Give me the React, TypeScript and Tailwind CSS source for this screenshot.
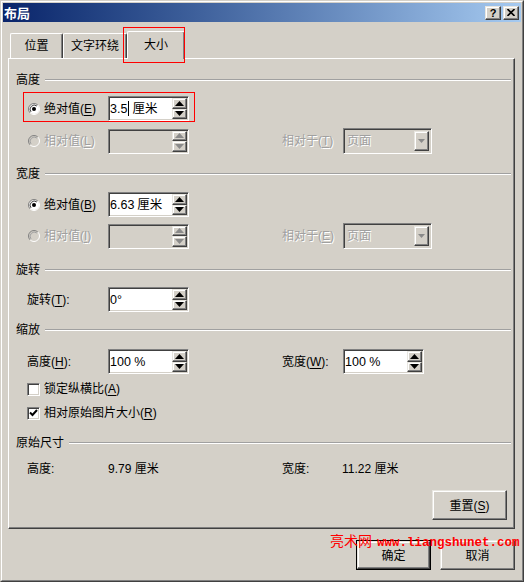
import React from 'react';

const sunken =
  'border border-t-[#808080] border-l-[#808080] border-b-white border-r-white shadow-[inset_1px_1px_0_#404040,inset_-1px_-1px_0_#d4d0c8]';
const raised =
  'border border-t-[#e8e6e0] border-l-[#e8e6e0] border-b-[#404040] border-r-[#404040] shadow-[inset_-1px_-1px_0_#808080,inset_1px_1px_0_#ffffff]';
const dim = 'text-[#a0a0a0] [text-shadow:1px_1px_0_#ffffff]';

function Arrow({ up, disabled, small }: { up?: boolean; disabled?: boolean; small?: boolean }) {
  const w = small ? 7 : 9;
  const h = small ? 4 : 5;
  return (
    <svg width={w} height={h} viewBox={`0 0 ${w} ${h}`}>
      <polygon
        points={up ? `${w / 2},0 ${w},${h} 0,${h}` : `0,0 ${w},0 ${w / 2},${h}`}
        fill={disabled ? '#8a8a8a' : '#000000'}
      />
    </svg>
  );
}

function SpinBox({ children, disabled, w = 'w-[81px]' }: { children?: React.ReactNode; disabled?: boolean; w?: string }) {
  return (
    <div className={`flex h-[25px] ${w} ${sunken} ${disabled ? 'bg-[#d4d0c8]' : 'bg-white'}`}>
      <div className="flex flex-1 items-center pl-[1px] text-[12.5px] text-black">{children}</div>
      <div className="flex w-[16px] flex-col py-px pr-px">
        <div className={`flex flex-1 items-center justify-center bg-[#d4d0c8] ${raised}`}>
          <Arrow up disabled={disabled} />
        </div>
        <div className={`flex flex-1 items-center justify-center bg-[#d4d0c8] ${raised}`}>
          <Arrow disabled={disabled} />
        </div>
      </div>
    </div>
  );
}

function Combo() {
  return (
    <div className={`flex h-[26px] w-[89px] ${sunken} bg-[#d4d0c8]`}>
      <div className={`flex flex-1 items-center pl-[3px] ${dim}`}>页面</div>
      <div className={`my-[2px] mr-[2px] flex w-[15px] items-center justify-center bg-[#d4d0c8] ${raised}`}>
        <Arrow disabled small />
      </div>
    </div>
  );
}

function Radio({ checked, disabled }: { checked?: boolean; disabled?: boolean }) {
  return (
    <svg width="12" height="12" viewBox="0 0 12 12">
      <circle cx="6" cy="6" r="5" fill={disabled ? '#d4d0c8' : '#ffffff'} />
      <path d="M2.11 9.89 A5.5 5.5 0 0 1 9.89 2.11" fill="none" stroke="#808080" />
      <path d="M9.89 2.11 A5.5 5.5 0 0 1 2.11 9.89" fill="none" stroke="#ffffff" />
      <path d="M3 8.9 A4.2 4.2 0 0 1 8.9 3" fill="none" stroke={disabled ? '#a0a0a0' : '#404040'} />
      {checked && <circle cx="6" cy="6" r="2" fill="#000000" />}
    </svg>
  );
}

function Check({ checked }: { checked?: boolean }) {
  return (
    <div className={`flex h-[13px] w-[13px] items-center justify-center bg-white ${sunken}`}>
      {checked && (
        <svg width="9" height="8" viewBox="0 0 9 8">
          <path d="M1 3.5 L3.5 6 L8 1" fill="none" stroke="#000000" strokeWidth="2" />
        </svg>
      )}
    </div>
  );
}

function Header({ title, className = '' }: { title: string; className?: string }) {
  return (
    <div className={`flex h-[16px] items-center pl-[7px] pr-[3px] ${className}`}>
      <span>{title}</span>
      <div className="ml-[5px] h-[2px] flex-1 border-t border-b border-t-[#a0a0a0] border-b-white" />
    </div>
  );
}

function Key({ k }: { k: string }) {
  return <span className="underline underline-offset-2">{k}</span>;
}

function Button({ children, isDefault, className = '' }: { children: React.ReactNode; isDefault?: boolean; className?: string }) {
  return (
    <div className={`h-[30px] w-[75px] ${isDefault ? 'border border-black' : ''} ${className}`}>
      <div className={`flex h-full w-full items-center justify-center bg-[#d4d0c8] pt-[2px] ${raised}`}>{children}</div>
    </div>
  );
}

const Tab = ({ label, w, active }: { label: string; w: string; active?: boolean }) => (
  <div
    className={`flex items-center justify-center rounded-t-[2px] border-t border-l border-r border-t-white border-l-white border-r-[#404040] bg-[#d4d0c8] shadow-[inset_-1px_0_0_#808080] ${w} ${
      active ? 'h-[28px]' : 'mb-px h-[25px]'
    }`}
  >
    <span className={active ? 'pb-[2px]' : ''}>{label}</span>
  </div>
);

export default function App() {
  return (
    <div className="relative h-[582px] w-[524px] border border-t-[#d4d0c8] border-l-[#d4d0c8] border-b-[#404040] border-r-[#404040] bg-[#d4d0c8] font-['Liberation_Sans','Noto_Sans_CJK_SC',sans-serif] text-[12px] leading-[16px] text-black">
      <div className="flex h-full flex-col border border-t-white border-l-white border-b-[#808080] border-r-[#808080] p-px">
        {/* title bar */}
        <div className="flex h-[19px] items-center justify-between bg-gradient-to-r from-[#0a246a] to-[#a6caf0] pl-[1px] pr-[2px]">
          <span className="font-['Noto_Sans_CJK_SC',sans-serif] text-[13px] font-bold text-white">布局</span>
          <div className="flex gap-[2px]">
            <div className={`flex h-[14px] w-[16px] items-center justify-center bg-[#d4d0c8] text-[11px] font-bold ${raised}`}>?</div>
            <div className={`flex h-[14px] w-[16px] items-center justify-center bg-[#d4d0c8] ${raised}`}>
              <svg width="8" height="7" viewBox="0 0 8 7">
                <path d="M0.5 0 L7.5 7 M7.5 0 L0.5 7" stroke="#000000" strokeWidth="1.6" />
              </svg>
            </div>
          </div>
        </div>

        <div className="flex flex-1 flex-col px-[5px]">
          {/* tabs */}
          <div className="relative z-10 mt-[9px] -mb-px flex items-end pl-[2px]">
            <Tab label="位置" w="w-[53px]" />
            <Tab label="文字环绕" w="w-[64px]" />
            <Tab label="大小" w="w-[58px]" active />
            <div className="pointer-events-none absolute left-[115px] top-[-4px] h-[36px] w-[62px] border border-[#ff0000]" />
          </div>

          {/* panel */}
          <div className="flex h-[471px] w-[507px] flex-col border border-t-white border-l-white border-b-[#404040] border-r-[#404040] shadow-[inset_-1px_-1px_0_#808080]">
            <Header title="高度" className="mt-[13px]" />
            <div className="relative mt-[8px] flex items-center">
              <div className="flex w-[99px] items-center pl-[19px]">
                <Radio checked />
                <span className="ml-[4px]">
                  绝对值(<Key k="E" />)
                </span>
              </div>
              <SpinBox>
                3.5
                <span className="ml-[1px] inline-block h-[15px] w-px bg-black" />
                <span className="ml-[3px]">厘米</span>
              </SpinBox>
              <div className="pointer-events-none absolute left-[14px] top-[-4px] h-[30px] w-[172px] border border-[#ff0000]" />
            </div>
            <div className="mt-[7px] flex items-center">
              <div className="flex w-[99px] items-center pl-[19px]">
                <Radio disabled />
                <span className={`ml-[4px] ${dim}`}>
                  相对值(<Key k="L" />)
                </span>
              </div>
              <SpinBox disabled />
              <span className={`ml-[93px] w-[61px] ${dim}`}>
                相对于(<Key k="T" />)
              </span>
              <Combo />
            </div>

            <Header title="宽度" className="mt-[12px]" />
            <div className="mt-[10px] flex items-center">
              <div className="flex w-[99px] items-center pl-[19px]">
                <Radio checked />
                <span className="ml-[4px]">
                  绝对值(<Key k="B" />)
                </span>
              </div>
              <SpinBox>
                6.63 <span className="ml-[3px]">厘米</span>
              </SpinBox>
            </div>
            <div className="mt-[6px] flex items-center">
              <div className="flex w-[99px] items-center pl-[19px]">
                <Radio disabled />
                <span className={`ml-[4px] ${dim}`}>
                  相对值(<Key k="I" />)
                </span>
              </div>
              <SpinBox disabled />
              <span className={`ml-[93px] w-[61px] ${dim}`}>
                相对于(<Key k="E" />)
              </span>
              <Combo />
            </div>

            <Header title="旋转" className="mt-[13px]" />
            <div className="mt-[9px] flex items-center">
              <span className="w-[99px] pl-[18px]">
                旋转(<Key k="T" />):
              </span>
              <SpinBox>0°</SpinBox>
            </div>

            <Header title="缩放" className="mt-[10px]" />
            <div className="mt-[11px] flex items-center">
              <span className="w-[99px] pl-[18px]">
                高度(<Key k="H" />):
              </span>
              <SpinBox>100 %</SpinBox>
              <span className="ml-[93px] w-[61px]">
                宽度(<Key k="W" />):
              </span>
              <SpinBox>100 %</SpinBox>
            </div>
            <div className="mt-[7px] flex h-[16px] items-center pl-[18px]">
              <Check />
              <span className="ml-[4px]">
                锁定纵横比(<Key k="A" />)
              </span>
            </div>
            <div className="mt-[8px] flex h-[16px] items-center pl-[18px]">
              <Check checked />
              <span className="ml-[4px]">
                相对原始图片大小(<Key k="R" />)
              </span>
            </div>

            <Header title="原始尺寸" className="mt-[14px]" />
            <div className="mt-[10px] flex h-[16px] items-center">
              <span className="w-[99px] pl-[18px]">高度:</span>
              <span className="w-[174px]">9.79 厘米</span>
              <span className="w-[60px]">宽度:</span>
              <span>11.22 厘米</span>
            </div>

            <div className="mt-[13px] flex justify-end pr-[7px]">
              <Button className="h-[29px]">
                重置(<Key k="S" />)
              </Button>
            </div>
          </div>

          {/* dialog buttons */}
          <div className="mt-[11px] flex justify-end gap-[9px] pr-px">
            <Button isDefault>确定</Button>
            <Button>取消</Button>
          </div>
        </div>
      </div>

      {/* watermark */}
      <div className="pointer-events-none absolute left-[329px] top-[532px] flex items-baseline text-[#ff0000]">
        <span className="font-['Noto_Sans_CJK_SC',sans-serif] text-[14px] leading-[15px]">亮术网</span>
        <span className="ml-[5px] font-['Liberation_Mono',monospace] text-[12.5px] font-bold leading-[15px]">
          www.liangshunet.com
        </span>
      </div>
    </div>
  );
}
